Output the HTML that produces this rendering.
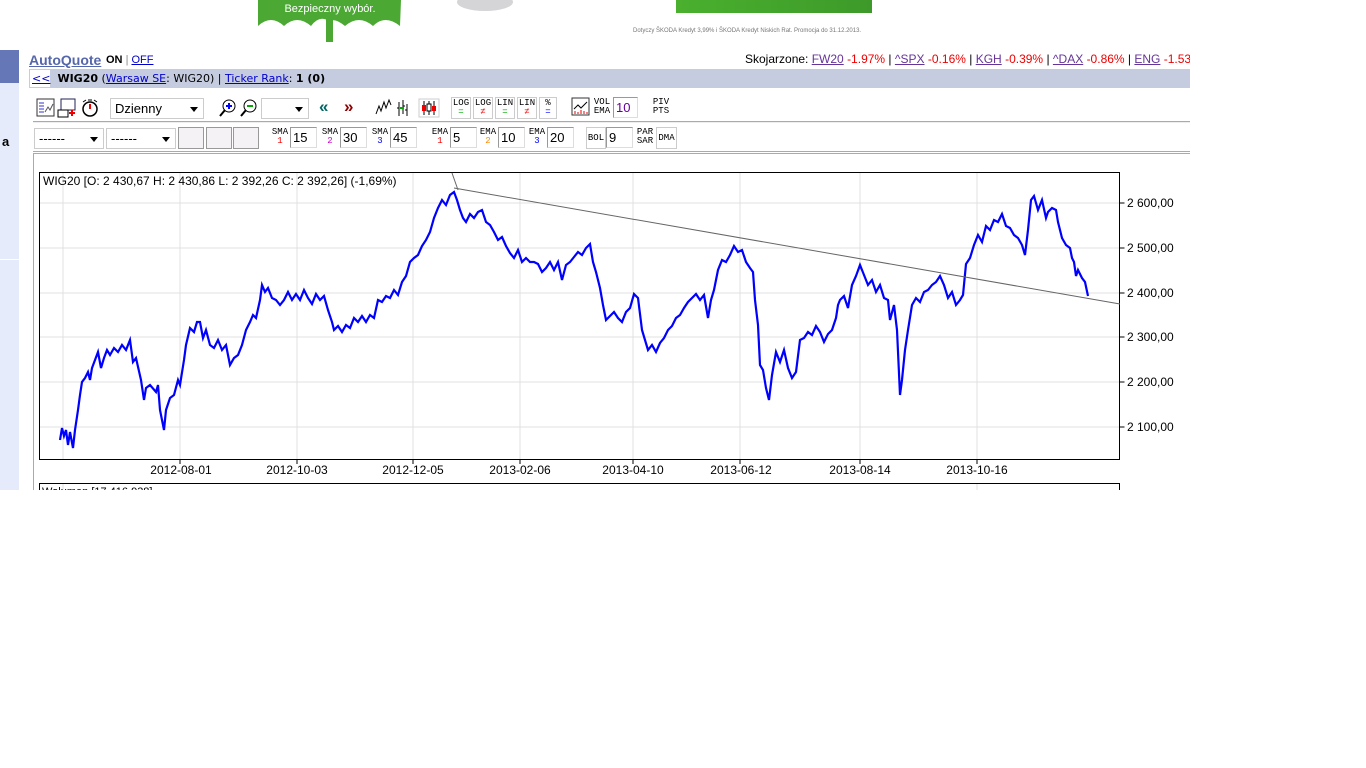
<!DOCTYPE html>
<html><head><meta charset="utf-8"><style>
*{margin:0;padding:0;box-sizing:border-box}
body{width:1366px;height:768px;background:#fff;font-family:"Liberation Sans",Arial,sans-serif;position:relative;overflow:hidden}
.a{position:absolute}
.btn{position:absolute;height:22px;border:1px solid #ccc;background:#fff;font:9px "Liberation Mono",monospace;line-height:9px;text-align:center;padding-top:1px}
.inp{position:absolute;height:21px;border:1px solid #999;border-right-color:#ddd;border-bottom-color:#ddd;font-size:13px;padding:2px 0 0 2px;background:#fff}
.sel{position:absolute;height:21px;border:1px solid #ccc;background:#fff;font-size:13px;padding:2px 4px}
.sel:after{content:"";position:absolute;right:5px;top:8px;border:4px solid transparent;border-top:5px solid #000}
u{text-decoration:underline}
</style></head><body>
<svg class="a" style="left:255px;top:0" width="150" height="42"><path d="M3 0 H146 L145 26 Q130 14 118 26 Q104 14 90 26 Q79 17 75 22 Q65 14 56 26 Q42 14 29 26 Q16 14 3 26 Z" fill="#4aa833"/><rect x="71" y="18" width="7" height="24" fill="#4aa833"/><text x="75" y="12" font-family="Liberation Sans" font-size="11" fill="#fff" text-anchor="middle">Bezpieczny wybór.</text></svg>
<svg class="a" style="left:450px;top:0" width="70" height="14"><ellipse cx="35" cy="2" rx="28" ry="9" fill="#d5d5d7"/></svg>
<div class="a" style="left:676px;top:0;width:196px;height:13px;background:linear-gradient(90deg,#4ab02e,#3d9a2a)"></div>
<div class="a" style="left:633px;top:28px;font-size:6px;color:#777">Dotyczy ŠKODA Kredyt 3,99% i ŠKODA Kredyt Niskich Rat. Promocja do 31.12.2013.</div>
<div class="a" style="left:0;top:50px;width:19px;height:440px;background:#e6ebfb"></div>
<div class="a" style="left:0;top:50px;width:19px;height:33px;background:#6677b8"></div>
<div class="a" style="left:0;top:259px;width:19px;height:1px;background:#fff"></div>
<div class="a" style="left:2px;top:134px;font-size:13px;font-weight:bold">a</div>
<div class="a" style="left:29px;top:52px;font-size:14px;color:#5566aa;font-weight:bold"><u>AutoQuote</u></div>
<div class="a" style="left:106px;top:54px;font-size:11px"><b>ON</b> <span style="color:#888">|</span> <u style="color:#00c">OFF</u></div>
<div class="a" style="left:745px;top:52px;font-size:12px;white-space:nowrap;width:445px;overflow:hidden">Skojarzone: <u style="color:#639">FW20</u> <span style="color:#e00">-1.97%</span> | <u style="color:#639">^SPX</u> <span style="color:#e00">-0.16%</span> | <u style="color:#639">KGH</u> <span style="color:#e00">-0.39%</span> | <u style="color:#639">^DAX</u> <span style="color:#e00">-0.86%</span> | <u style="color:#639">ENG</u> <span style="color:#e00">-1.53%</span></div>
<div class="a" style="left:29px;top:69px;width:1161px;height:19px;background:#c6cce0"></div>
<div class="a" style="left:30px;top:70px;width:20px;height:17px;background:#fff"></div>
<div class="a" style="left:32px;top:72px;font-size:11px;font-family:'DejaVu Sans',sans-serif;white-space:nowrap"><u style="color:#00c">&lt;&lt;</u>&nbsp; <b>WIG20</b> (<u style="color:#00c">Warsaw SE</u>: WIG20) | <u style="color:#00c">Ticker Rank</u>: <b>1 (0)</b></div>
<svg class="a" style="left:36px;top:98px" width="68" height="21"><rect x="1" y="1" width="17" height="17" fill="#fff" stroke="#333"/><path d="M3 5h5M3 8h5M3 11h5M3 14h5" stroke="#33c"/><path d="M9 14l3-5 2 3 3-6" stroke="#555" fill="none"/><rect x="25" y="1" width="14" height="11" fill="#fff" stroke="#225"/><rect x="22" y="12" width="10" height="7" fill="#fff" stroke="#000"/><path d="M33 15h6M36 12v6" stroke="#e00" stroke-width="2"/><circle cx="54" cy="11" r="7" fill="#fff" stroke="#000" stroke-width="1.5"/><path d="M54 11V6" stroke="#e00" stroke-width="2"/><path d="M47 4l3-2M61 4l-3-2M52 2h4" stroke="#000"/></svg>
<div class="sel" style="left:110px;top:98px;width:94px">Dzienny</div>
<svg class="a" style="left:218px;top:98px" width="42" height="20"><circle cx="11" cy="8" r="6" fill="#fff" stroke="#000"/><path d="M8 8h6M11 5v6" stroke="#00f" stroke-width="2"/><path d="M7 12l-5 6" stroke="#000" stroke-width="2"/><circle cx="32" cy="8" r="6" fill="#fff" stroke="#000"/><path d="M29 8h6" stroke="#0a0" stroke-width="2"/><path d="M28 12l-5 6" stroke="#000" stroke-width="2"/></svg>
<div class="sel" style="left:261px;top:98px;width:48px"></div>
<div class="a" style="left:319px;top:97px;font-size:17px;font-weight:bold;color:#066;letter-spacing:-5px">«</div>
<div class="a" style="left:344px;top:97px;font-size:17px;font-weight:bold;color:#800">»</div>
<svg class="a" style="left:374px;top:98px" width="66" height="20"><path d="M2 16l3-8 2 5 3-9 2 6 3-8 2 5" stroke="#000" fill="none"/><path d="M25 4v14M29 2v14M33 6v12M23 10h2M29 8h2M31 12h2" stroke="#000"/><path d="M26 10h4" stroke="#0a0" stroke-width="2"/><rect x="45" y="1" width="20" height="18" fill="#fff" stroke="#ccc"/><path d="M50 3v14M55 3v14M60 3v14" stroke="#000"/><rect x="48" y="7" width="4" height="6" fill="#e00"/><rect x="53" y="6" width="4" height="7" fill="#fff" stroke="#000"/><rect x="58" y="8" width="4" height="5" fill="#e00"/></svg>
<div class="btn" style="left:451px;top:97px;width:20px">LOG<br><span style="color:#0a0">=</span></div>
<div class="btn" style="left:473px;top:97px;width:20px">LOG<br><span style="color:#e00">≠</span></div>
<div class="btn" style="left:495px;top:97px;width:20px">LIN<br><span style="color:#0a0">=</span></div>
<div class="btn" style="left:517px;top:97px;width:20px">LIN<br><span style="color:#e00">≠</span></div>
<div class="btn" style="left:539px;top:97px;width:18px">%<br><span style="color:#00f">=</span></div>
<svg class="a" style="left:571px;top:97px" width="20" height="20"><rect x="1" y="1" width="17" height="17" fill="#fff" stroke="#333"/><path d="M3 12l4-4 3 3 6-6" stroke="#000" fill="none"/><path d="M4 17v-3M7 17v-2M10 17v-4M13 17v-3M16 17v-2" stroke="#e00"/></svg>
<div class="btn" style="left:592px;top:97px;width:20px;border:none">VOL<br>EMA</div>
<div class="inp" style="left:613px;top:97px;width:25px;color:#660099">10</div>
<div class="btn" style="left:651px;top:97px;width:20px;border:none">PIV<br>PTS</div>
<div class="a" style="left:33px;top:121px;width:1157px;height:2px;border-top:1px solid #aaa;border-bottom:1px solid #eee"></div>
<div class="sel" style="left:34px;top:128px;width:70px">------</div>
<div class="sel" style="left:106px;top:128px;width:70px">------</div>
<div class="a" style="left:178px;top:127px;width:26px;height:22px;background:#f4f2f4;border:1px solid #999"></div>
<div class="a" style="left:206px;top:127px;width:26px;height:22px;background:#f4f2f4;border:1px solid #999"></div>
<div class="a" style="left:233px;top:127px;width:26px;height:22px;background:#f4f2f4;border:1px solid #999"></div>
<div class="btn" style="left:270px;top:127px;width:20px;border:none">SMA<br><span style="color:#e00">1</span></div>
<div class="inp" style="left:290px;top:127px;width:27px">15</div>
<div class="btn" style="left:320px;top:127px;width:20px;border:none">SMA<br><span style="color:#c0c">2</span></div>
<div class="inp" style="left:340px;top:127px;width:27px">30</div>
<div class="btn" style="left:370px;top:127px;width:20px;border:none">SMA<br><span style="color:#00f">3</span></div>
<div class="inp" style="left:390px;top:127px;width:27px">45</div>
<div class="btn" style="left:430px;top:127px;width:20px;border:none">EMA<br><span style="color:#e00">1</span></div>
<div class="inp" style="left:450px;top:127px;width:27px">5</div>
<div class="btn" style="left:478px;top:127px;width:20px;border:none">EMA<br><span style="color:#f80">2</span></div>
<div class="inp" style="left:498px;top:127px;width:27px">10</div>
<div class="btn" style="left:527px;top:127px;width:20px;border:none">EMA<br><span style="color:#00f">3</span></div>
<div class="inp" style="left:547px;top:127px;width:27px">20</div>
<div class="btn" style="left:586px;top:127px;width:20px;padding-top:6px">BOL</div>
<div class="inp" style="left:606px;top:127px;width:27px">9</div>
<div class="btn" style="left:635px;top:127px;width:20px;border:none">PAR<br>SAR</div>
<div class="btn" style="left:656px;top:127px;width:21px;padding-top:6px">DMA</div>
<div class="a" style="left:33px;top:151px;width:1157px;height:3px;border-top:1px solid #aaa;border-bottom:1px solid #aaa"></div>
<div class="a" style="left:33px;top:154px;width:1157px;height:336px;border-left:1px solid #aaa"></div>
<svg class="a" style="left:0;top:0" width="1366" height="490" font-family="Liberation Sans" font-size="12">
<g stroke="#e0e0e0">
<path d="M40 203H1119M40 248H1119M40 293H1119M40 337H1119M40 382H1119M40 427H1119"/>
<path d="M63 172V459M180 172V459M297 172V459M413 172V459M520 172V459M633 172V459M740 172V459M860 172V459M977 172V459M977 483V490M63 483V490"/>
</g>
<rect x="39.5" y="172.5" width="1080" height="287" fill="none" stroke="#000"/>
<path d="M1119.5 203h5M1119.5 248h5M1119.5 293h5M1119.5 337h5M1119.5 382h5M1119.5 427h5M180 460v4M297 460v4M413 460v4M520 460v4M633 460v4M740 460v4M860 460v4M977 460v4" stroke="#000"/>
<g>
<text x="1127" y="207">2 600,00</text><text x="1127" y="252">2 500,00</text><text x="1127" y="297">2 400,00</text><text x="1127" y="341">2 300,00</text><text x="1127" y="386">2 200,00</text><text x="1127" y="431">2 100,00</text>
<g text-anchor="middle"><text x="181" y="474">2012-08-01</text><text x="297" y="474">2012-10-03</text><text x="413" y="474">2012-12-05</text><text x="520" y="474">2013-02-06</text><text x="633" y="474">2013-04-10</text><text x="741" y="474">2013-06-12</text><text x="860" y="474">2013-08-14</text><text x="977" y="474">2013-10-16</text></g>
<text x="43" y="185">WIG20 [O: 2 430,67  H: 2 430,86  L: 2 392,26  C: 2 392,26] (-1,69%)</text>
</g>
<polyline fill="none" stroke="#00f" stroke-width="2.2" stroke-linejoin="miter" points="60,440 62,428 64,436 66,430 68,445 70,432 73,448 75,430 78,410 80,395 82,382 85,378 88,372 90,380 92,368 95,360 98,352 101,368 104,358 107,350 110,355 114,348 118,352 122,345 126,350 130,340 133,362 136,358 141,380 144,400 146,388 150,385 156,392 158,385 160,410 162,420 164,430 166,410 170,398 174,395 178,380 180,385 184,360 186,345 190,328 194,332 197,322 200,322 203,338 206,330 210,345 214,348 218,340 222,350 226,345 230,365 234,358 238,355 242,345 246,330 250,322 253,315 256,318 260,300 262,285 265,292 268,288 272,298 276,300 280,305 284,300 288,292 292,300 296,294 300,300 304,290 308,298 312,304 316,294 320,300 324,296 328,310 332,322 334,330 338,326 342,332 346,325 350,328 354,318 358,322 362,316 366,322 370,315 374,318 378,300 382,302 386,296 390,298 394,290 398,295 402,282 406,276 410,262 414,258 418,255 422,246 426,240 430,232 434,218 438,208 442,200 446,205 450,195 454,192 457,200 460,210 463,218 466,222 470,214 474,218 478,212 482,210 486,222 490,225 494,232 498,240 502,237 506,246 510,253 514,258 518,250 522,262 526,258 530,262 534,262 538,264 542,272 546,268 550,262 554,270 558,262 562,280 566,265 570,262 574,257 578,252 582,255 586,248 590,244 593,262 596,272 600,288 603,305 606,320 610,316 614,312 618,318 622,322 626,312 630,308 634,294 638,298 642,330 645,340 648,350 652,345 656,352 660,343 664,338 668,330 672,326 676,318 680,315 684,308 688,302 692,298 696,294 700,300 704,295 708,318 711,300 714,290 718,270 722,260 726,262 730,255 734,246 738,252 742,250 746,262 750,268 753,272 755,300 758,325 760,365 763,370 766,388 769,400 772,375 776,352 780,362 784,350 788,368 792,378 796,372 800,340 804,338 808,332 812,335 816,326 820,332 824,342 828,334 832,330 836,318 838,305 840,300 844,296 848,308 852,285 856,276 860,265 864,275 868,285 872,280 876,292 880,285 884,298 888,300 890,320 894,305 897,330 900,395 902,380 905,350 908,330 912,305 916,298 920,302 924,292 928,290 932,285 936,282 940,276 944,285 948,298 952,292 956,305 960,300 963,295 966,264 970,258 974,245 978,235 982,242 986,226 990,230 994,220 998,222 1002,214 1006,226 1010,228 1014,235 1018,238 1022,245 1025,255 1028,230 1031,200 1034,196 1038,210 1042,200 1046,218 1048,212 1052,208 1056,210 1058,222 1062,238 1066,245 1070,248 1072,258 1074,262 1076,276 1078,270 1082,278 1085,282 1088,296"/>
<path d="M452 173L458 190M454 188L1120 304" stroke="#666" stroke-width="1"/>
<rect x="39.5" y="483.5" width="1080" height="10" fill="none" stroke="#000"/>
<text x="42" y="495" font-size="11">Wolumen [17 416 938]</text>
</svg>
</body></html>
